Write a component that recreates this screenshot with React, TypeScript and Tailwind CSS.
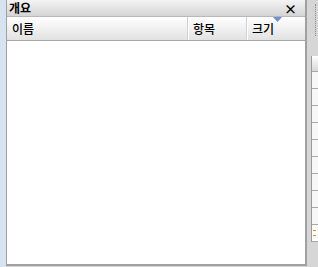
export default function App() {
  const cells = Array.from({ length: 9 })
  return (
    <div className="flex w-[318px] h-[267px] bg-[#d6d6d6] font-['Noto_Sans_CJK_KR',sans-serif] text-[12px] text-black overflow-hidden">
      {/* left strip */}
      <div className="w-[6px] h-full bg-[#d6e3f1] shrink-0" />

      {/* panel */}
      <div className="flex flex-col w-[301px] h-[266px] border-r-2 border-b-2 border-l border-[#a0a0a0] bg-white shrink-0">
        {/* title bar */}
        <div className="flex items-center justify-between h-[17px] px-[2px] bg-gradient-to-b from-[#f4f4f4] to-[#d4d4d4] border-b border-[#b8b8b8]">
          <span className="font-bold leading-none">개요</span>
          <span className="mr-[6px] text-[13px] font-bold leading-none">×</span>
        </div>
        {/* column headers */}
        <div className="flex h-[24px] font-medium bg-gradient-to-b from-white to-[#e2e2e2] border-b border-[#a8a8a8]">
          <div className="flex items-center flex-1 pl-[5px] border-r border-[#d0d0d0]">이름</div>
          <div className="flex items-center w-[59px] pl-[4px] border-r border-[#d0d0d0] border-l border-l-white">항목</div>
          <div className="relative flex items-center w-[58px] pl-[4px] border-l border-white">
            크기
            <svg className="absolute right-[23px] top-0" width="9" height="6" viewBox="0 0 9 6">
              <path d="M0 0 H9 L4.5 5 Z" fill="#6f8fd6" />
            </svg>
          </div>
        </div>
        <div className="flex-1" />
      </div>

      {/* right edge */}
      <div className="flex flex-col flex-1 pt-[4px]">
        <div className="ml-[8px] h-[32px] border-l border-dotted border-[#8a8a8a]" />
        <div className="ml-[4px] mt-[20px] flex flex-col border-l border-[#9a9a9a] bg-white">
          <div className="h-[16px] bg-gradient-to-b from-white to-[#d8d8d8] border-b border-[#a8a8a8]" />
          {cells.map((_, i) => (
            <div key={i} className="h-[17px] bg-[#f7f7f7] border-b border-[#a8a8a8]" />
          ))}
          <div className="h-[17px] pl-[1px] flex flex-col justify-center gap-[4px] bg-white border-b border-[#a8a8a8]">
            <div className="w-[3px] h-[1px] bg-[#d08a2a]" />
            <div className="w-[3px] h-[1px] bg-[#d08a2a]" />
          </div>
        </div>
      </div>
    </div>
  )
}
